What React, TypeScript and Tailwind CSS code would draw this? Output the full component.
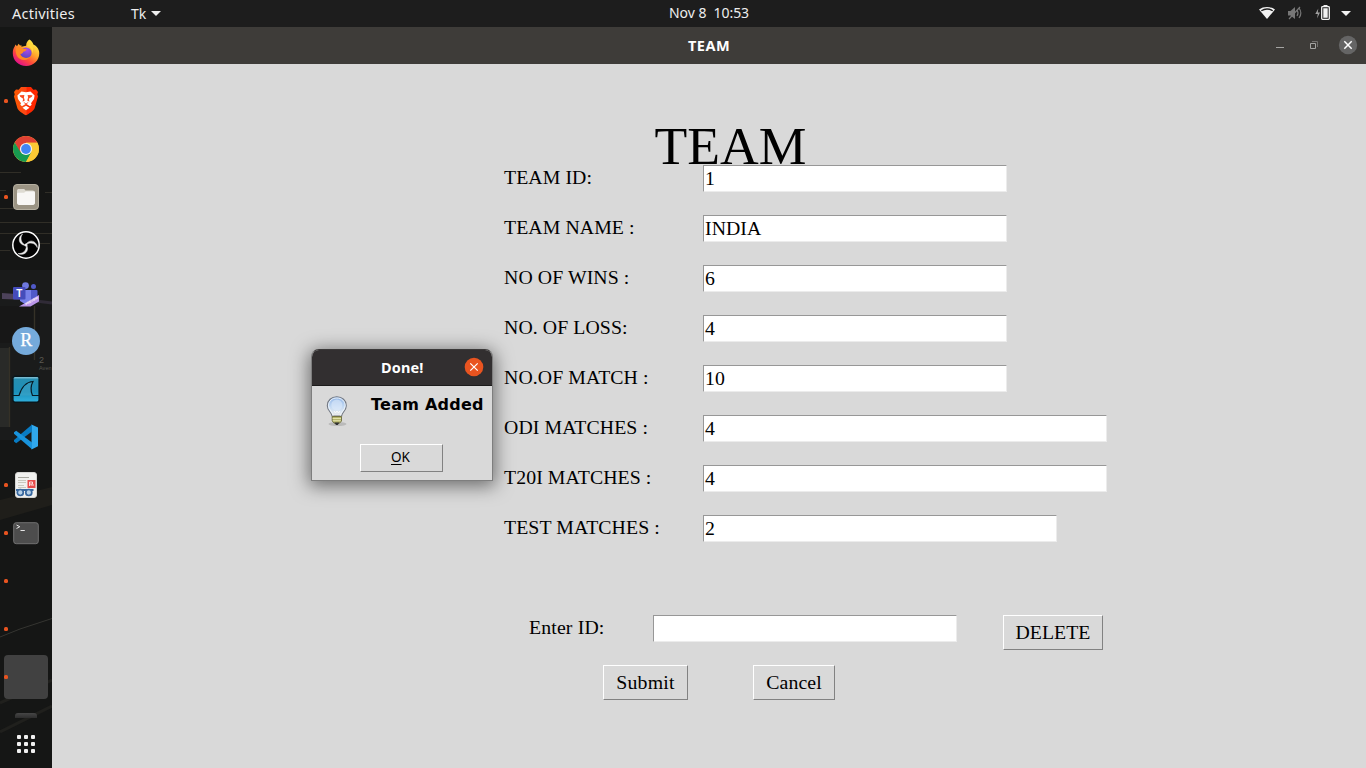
import type { ReactNode } from "react";

type Field = { label: string; value: string; width: string };

const fields: Field[] = [
  { label: "TEAM ID:", value: "1", width: "w-[304px]" },
  { label: "TEAM NAME :", value: "INDIA", width: "w-[304px]" },
  { label: "NO OF WINS :", value: "6", width: "w-[304px]" },
  { label: "NO. OF LOSS:", value: "4", width: "w-[304px]" },
  { label: "NO.OF MATCH :", value: "10", width: "w-[304px]" },
  { label: "ODI MATCHES :", value: "4", width: "w-[404px]" },
  { label: "T20I MATCHES :", value: "4", width: "w-[404px]" },
  { label: "TEST MATCHES :", value: "2", width: "w-[354px]" },
];

function Entry({ value, width }: { value: string; width: string }) {
  return (
    <div
      className={`h-[27px] shrink-0 border border-t-[#979797] border-l-[#979797] border-r-[#ececec] border-b-[#ececec] bg-white pl-px leading-[24px] ${width}`}
    >
      {value}
    </div>
  );
}

function TkButton({ children, className }: { children: ReactNode; className: string }) {
  return (
    <button
      className={`shrink-0 border border-t-white border-l-white border-r-[#828282] border-b-[#828282] bg-[#d9d9d9] ${className}`}
    >
      {children}
    </button>
  );
}

function Firefox() {
  return (
    <svg width="28" height="28" viewBox="0 0 28 28">
      <defs>
        <linearGradient id="ffBody" x1="0.85" y1="0.1" x2="0.25" y2="0.95">
          <stop offset="0" stopColor="#fff24a" />
          <stop offset="0.4" stopColor="#ffa62a" />
          <stop offset="0.7" stopColor="#ff4a3a" />
          <stop offset="1" stopColor="#e3108c" />
        </linearGradient>
        <radialGradient id="ffGlobe" cx="0.6" cy="0.2" r="0.9">
          <stop offset="0" stopColor="#b04be8" />
          <stop offset="1" stopColor="#4d45c0" />
        </radialGradient>
      </defs>
      <path d="M17.5 0.6C19.5 1.8 20.8 3.8 21.4 5.4C24 6.5 26.2 8.7 27 12C28.6 20 22.5 27 14.2 27C6.5 27 0.8 21.2 0.8 14.2C0.8 11 1.5 9 2.8 7.2L3.5 5.6L5 7.2L6.6 4.8L8 6.5L9.5 6.2L9.4 7.8L14.2 6.8C14 4 15.4 2 17.5 0.6Z" fill="url(#ffBody)" />
      <circle cx="14" cy="14" r="5.6" fill="url(#ffGlobe)" />
      <path d="M4 8.5C7 7.2 9 8 10 9.4L14.8 10.2C14.3 11.8 12.6 12.3 11.2 12.8C11 14.5 9.4 15.2 7.8 14.8C9.5 19 15 20.5 19 17C16 23 7 22 4.5 16C3.5 13 3.4 10 4 8.5Z" fill="#ff8a24" />
      <path d="M15 7C18 7.5 20.5 10 20.2 14.5C22 11 21 6 18.5 3Z" fill="#ffd83a" />
    </svg>
  );
}

function Brave() {
  return (
    <svg width="28" height="30" viewBox="0 0 28 30">
      <defs>
        <linearGradient id="braveFill" x1="0" x2="1">
          <stop offset="0" stopColor="#ff5a00" />
          <stop offset="0.5" stopColor="#fb4516" />
          <stop offset="0.55" stopColor="#ff2500" />
          <stop offset="1" stopColor="#ff2a00" />
        </linearGradient>
      </defs>
      <path d="M9 1H19L21.3 3.7L24 3.6L26 6L25.3 8.3L26 10.5L22.6 22.2C21.6 25 17 27.7 14 29.2C11 27.7 6.4 25 5.4 22.2L2 10.5L2.7 8.3L2 6L4 3.6L6.7 3.7Z" fill="url(#braveFill)" />
      <path d="M9.5 5.5L14 6.2L18.5 5.5L22.6 9.5L22 13L19 17.2L19.7 18.8L18 20.3L14 17.8L10 20.3L8.3 18.8L9 17.2L6 13L5.4 9.5Z" fill="white" />
      <path d="M7.5 9.2L12.4 8.9L11.9 11.5L12.8 14.6L10.5 15.7L11.2 12.7L8.2 10.7ZM20.5 9.2L15.6 8.9L16.1 11.5L15.2 14.6L17.5 15.7L16.8 12.7L19.8 10.7Z" fill="#fb4c22" />
      <path d="M10.5 21.8L14 19.8L17.5 21.8L14 24.3Z" fill="white" />
      <path d="M11.8 16.5L14 17.8L16.2 16.5" stroke="#fb4522" strokeWidth="0.8" fill="none" />
    </svg>
  );
}

function Chrome() {
  return (
    <svg width="26" height="26" viewBox="0 0 26 26">
      <circle cx="13" cy="13" r="13" fill="#fbc934" />
      <path d="M13 13L7 16.5L1.75 6.5A13 13 0 0 1 24.3 6.7H13Z" fill="#df4033" />
      <path d="M1.75 6.5L7.6 16.3L13 18.8L18.3 16.2L13 26A13 13 0 0 1 1.75 6.5Z" fill="#179b50" />
      <path d="M13 6.8H24.3A13 13 0 0 1 13 26L18.6 16Z" fill="#fbc934" />
      <circle cx="13" cy="13" r="6.1" fill="#f1f3f4" />
      <circle cx="13" cy="13" r="4.9" fill="#4285f4" />
    </svg>
  );
}

function Files() {
  return (
    <svg width="26" height="26" viewBox="0 0 26 26">
      <rect x="0.5" y="0.5" width="25" height="25" rx="3.5" fill="#9b9484" stroke="#b5afa0" />
      <path d="M4 7C4 5.5 4.7 5 6 5H10.5C11.5 5 12 5.6 12.4 6.5H19.5C21 6.5 22 7.2 22 8.8V18.5C22 20 21 21 19.5 21H6.5C5 21 4 20 4 18.5Z" fill="#dedbd2" />
      <path d="M4 10C4 9 4.6 8.7 5.6 8.7H11L12.8 7.4H20.6C21.6 7.4 22 8 22 9V18.5C22 20 21 21 19.5 21H6.5C5 21 4 20 4 18.5Z" fill="#f8f7f5" />
    </svg>
  );
}

function Obs() {
  const blade = "M14 14.5C10 12.5 8.3 9 9.3 5.5C9.5 4.6 9.9 3.8 10.6 3C8.4 4.3 7.2 6.5 7.3 9C7.5 12 10 14.4 14 14.5Z";
  return (
    <svg width="28" height="28" viewBox="0 0 28 28">
      <circle cx="14" cy="14" r="13.2" fill="#030303" stroke="white" strokeWidth="1.5" />
      <g fill="#eeeeee" stroke="#eeeeee" strokeWidth="0.5">
        <path d={blade} />
        <path d={blade} transform="rotate(120 14 14)" />
        <path d={blade} transform="rotate(240 14 14)" />
      </g>
      <circle cx="14" cy="14" r="1.5" fill="#eeeeee" />
    </svg>
  );
}

function Teams() {
  return (
    <svg width="28" height="28" viewBox="0 0 28 28">
      <circle cx="13.5" cy="4.6" r="3.4" fill="#7079de" />
      <circle cx="21.5" cy="5.6" r="2.5" fill="#5059c9" />
      <rect x="18" y="9" width="7.5" height="12" rx="1" fill="#5059c9" />
      <path d="M8 9H19V19C19 23 16 24 13 23L8 20Z" fill="#7780e8" />
      <rect x="1" y="6" width="12.5" height="12.5" rx="1" fill="#454cbb" />
      <text x="7.3" y="15.5" textAnchor="middle" fontSize="10" fontWeight="bold" fontFamily="Liberation Sans, sans-serif" fill="white">T</text>
      <path d="M7 25.5L27 14V20.5L18.5 25.5Z" fill="#b995e8" />
      <text transform="translate(14 24.3) rotate(-30)" fontSize="3" fontWeight="bold" fontFamily="Liberation Sans, sans-serif" fill="white">PREVIEW</text>
    </svg>
  );
}

function RStudio() {
  return (
    <svg width="28" height="28" viewBox="0 0 28 28">
      <circle cx="14" cy="14" r="14" fill="#75aadb" />
      <text x="14.2" y="19.3" textAnchor="middle" fontSize="18" fontFamily="Liberation Serif, serif" fill="white" stroke="white" strokeWidth="0.25">R</text>
    </svg>
  );
}

function Wireshark() {
  return (
    <svg width="28" height="28" viewBox="0 0 28 28">
      <defs>
        <linearGradient id="wsFill" x1="0" y1="0" x2="0" y2="1">
          <stop offset="0" stopColor="#a9d3e2" />
          <stop offset="0.12" stopColor="#268fb2" />
          <stop offset="0.6" stopColor="#1c8fb9" />
          <stop offset="1" stopColor="#30b1de" />
        </linearGradient>
      </defs>
      <rect x="0.9" y="1.3" width="26.2" height="25.8" rx="2" fill="url(#wsFill)" stroke="#07161d" strokeWidth="1.4" />
      <path d="M1 20.5H7C9 14 13 7 21 6.5C18.5 11 18.6 16 20.5 20.5H27" fill="#48a8c9" fillOpacity="0.45" stroke="#071a24" strokeWidth="1.2" />
    </svg>
  );
}

function VsCode() {
  return (
    <svg width="26" height="26" viewBox="0 0 26 26">
      <path d="M18.5 0.5L25 3.5V22.3L18.5 25.5Z" fill="#30a8ed" />
      <path d="M1 17.4L3.2 19.3L19 7.5V0.5L1 15.9Z" fill="#087bc3" />
      <path d="M1 8.2L3.2 6.7L19 18.5V25.2L1 9.7Z" fill="#1993dc" />
    </svg>
  );
}

function Viewer() {
  return (
    <svg width="24" height="26" viewBox="0 0 24 26">
      <rect x="1.5" y="0.5" width="21" height="25" rx="2.5" fill="#f0f0ee" stroke="#d4d4d2" />
      <path d="M4 5.5H15" stroke="#a6a69e" />
      <path d="M4 8.5H12M4 10.5H12M4 13.5H10M4 15.5H12" stroke="#c8c8be" />
      <rect x="13.5" y="8" width="8" height="8" fill="#e84b4b" />
      <path d="M15.5 14V10H18.5V12H16M20 13H16.5" stroke="white" strokeWidth="0.8" fill="none" />
      <path d="M2 18H19.5" stroke="#38689f" strokeWidth="2" />
      <circle cx="6.3" cy="20.5" r="3" fill="#b6d0e8" stroke="#38689f" strokeWidth="1.7" />
      <circle cx="14.8" cy="20.5" r="3" fill="#b6d0e8" stroke="#38689f" strokeWidth="1.7" />
    </svg>
  );
}

function Terminal() {
  return (
    <svg width="26" height="24" viewBox="0 0 26 24">
      <rect x="0.7" y="1.7" width="24.6" height="21" rx="2.5" fill="#4d4d4d" stroke="#717171" />
      <path d="M3.5 4L6.8 5.7L3.5 7.5M7.5 9.5H11.8" stroke="#e6e6e6" fill="none" />
    </svg>
  );
}

const dock: { icon?: ReactNode; running?: boolean; active?: boolean; shift?: string }[] = [
  { icon: <Firefox /> },
  { icon: <Brave />, running: true },
  { icon: <Chrome /> },
  { icon: <Files />, running: true },
  { icon: <Obs /> },
  { icon: <Teams />, shift: "pt-[3px]" },
  { icon: <RStudio /> },
  { icon: <Wireshark /> },
  { icon: <VsCode /> },
  { icon: <Viewer />, running: true },
  { icon: <Terminal />, running: true },
  { running: true },
  { running: true },
  { running: true, active: true },
];

function Wallpaper() {
  return (
    <svg className="absolute inset-0" width="52" height="741" viewBox="0 27 52 741">
      <rect y="27" width="52" height="741" fill="#151615" />
      <path d="M0 270H52V440H0Z" fill="#1a1b1b" />
      <path d="M0 172.5H21M0 190.5H6M45 192.5H52M0 208.5H20M0 222.5H52M0 233.5H20M30 233.5H52M0 250.5H10M40 243.5H50" stroke="#37352c" strokeWidth="0.8" />
      <path d="M2 293L30 295V300L2 299Z" fill="#4c425a" />
      <path d="M28 300L52 303" stroke="#302b37" strokeWidth="3" />
      <path d="M0 306H40V343H0Z" fill="#171717" />
      <path d="M0 348H9V427H0Z" fill="#292a28" />
      <path d="M9.5 347V427M34.5 306V360" stroke="#353127" strokeWidth="1.4" />
      <text x="39" y="363" fontSize="9" fontFamily="Liberation Sans, sans-serif" fill="#5c5a53">2</text>
      <text x="39" y="370" fontSize="5.5" fontFamily="Liberation Sans, sans-serif" fill="#54534c">Aven</text>
      <path d="M0 500L52 487V505L0 520Z" fill="#1f1e1a" />
      <path d="M0 637L20 629L52 618.5" stroke="#353531" fill="none" />
      <path d="M0 703L52 680M0 732L52 706" stroke="#20201d" strokeWidth="3" />
    </svg>
  );
}

export default function App() {
  return (
    <div className="relative flex h-[768px] w-[1366px] flex-col overflow-hidden bg-[#d9d9d9] font-['Liberation_Serif',serif] text-[19.8px] tracking-[0.05px] text-black">
      <header className="flex h-[27px] shrink-0 items-center bg-[#1d1d1d] font-['Noto_Sans',sans-serif] text-[14px] leading-[27px] tracking-normal text-[#eeeeee]">
        <div className="w-[131px] pl-3 text-[14.5px] tracking-[0.25px]">Activities</div>
        <div className="flex w-[538px] items-center gap-[5px]">
          <span>Tk</span>
          <svg width="10" height="5" viewBox="0 0 10 5"><path d="M0 0H10L5 5Z" fill="#eeeeee" /></svg>
        </div>
        <div className="w-[589px] whitespace-pre pb-[2px] leading-[25px] tracking-[-0.05px]">Nov 8  10:53</div>
        <svg width="108" height="27" viewBox="1258 0 108 27">
          <path d="M1259 9.5C1263.5 6.2 1270.5 6.2 1275 9.5L1267 19Z" fill="#f2f2f2" />
          <path d="M1261.3 10.7C1264.7 8.7 1269.3 8.7 1272.7 10.7" stroke="#1d1d1d" strokeWidth="1.3" fill="none" />
          <path d="M1288 11H1290.5L1295 7V19L1290.5 15.5H1288Z" fill="#777777" />
          <path d="M1297 10Q1299 13 1297 16M1299 8Q1302.7 13 1299 18M1289 19L1300 7" stroke="#777777" strokeWidth="1.2" fill="none" />
          <path d="M1318.3 8.5L1315.3 14H1317.8L1317 18.5L1320 12.5H1317.8Z" fill="#a0a0a0" />
          <rect x="1321.7" y="6.7" width="7.6" height="12.6" rx="0.8" stroke="#f2f2f2" strokeWidth="1.3" fill="none" />
          <path d="M1323.5 5H1327.5V6.5H1323.5ZM1323.3 8.3H1327.7V17.7H1323.3Z" fill="#f2f2f2" />
          <path d="M1341 11H1351L1346 16Z" fill="#f2f2f2" />
        </svg>
      </header>

      <div className="flex min-h-0 flex-1">
        <aside className="relative flex w-[52px] shrink-0 flex-col overflow-hidden">
          <Wallpaper />
          <nav className="relative flex flex-col pt-[2px]">
            {dock.map((item, i) => (
              <div key={i} className="relative flex h-12 items-center justify-center">
                {item.active && <div className="h-11 w-11 rounded-[4px] bg-[#414141]" />}
                <span className={item.shift}>{item.icon}</span>
                {item.running && (
                  <span className="absolute top-[22px] left-1 h-1 w-1 rounded-[1.5px] bg-[#e95420]" />
                )}
              </div>
            ))}
          </nav>
          <div className="relative mt-[12px] ml-[15px] h-[5px] w-[22px] rounded-t-[3px] bg-linear-to-b from-[#464646] to-[#2e2e2e]" />
          <div className="relative mt-[17px] ml-[17px] grid w-[18px] grid-cols-3 gap-[3px]">
            {Array.from({ length: 9 }, (_, i) => (
              <span key={i} className="h-1 w-1 rounded-[1px] bg-[#f0f0f0]" />
            ))}
          </div>
        </aside>

        <main className="flex min-w-0 flex-1 flex-col">
          <div className="flex h-[37px] shrink-0 items-center bg-[#3e3c39] font-['Noto_Sans',sans-serif] text-white">
            <div className="w-[1223px] pl-[636px] text-[14.5px] font-bold tracking-[0.5px]">TEAM</div>
            <svg width="91" height="37" viewBox="1275 27 91 37">
              <path d="M1276 47.5H1284" stroke="#a5a5a3" />
              <path d="M1310.5 43.5H1315.5V48.5H1310.5Z" stroke="#a5a5a3" fill="none" />
              <path d="M1312 41.5H1317.5V47" stroke="#73716f" fill="none" />
              <circle cx="1348" cy="45" r="9.2" fill="#656565" />
              <path d="M1344.3 41.3L1351.7 48.7M1351.7 41.3L1344.3 48.7" stroke="white" strokeWidth="1.5" />
            </svg>
          </div>

          <section className="flex flex-1 flex-col pt-[63px]">
            <h1 className="ml-[602.5px] h-[38px] text-[53.6px] leading-[38px]">TEAM</h1>
            {fields.map((f) => (
              <div key={f.label} className="flex h-[50px] shrink-0 items-start pl-[452px]">
                <label className="w-[199px] leading-[25px] tracking-[0.09px]">{f.label}</label>
                <Entry value={f.value} width={f.width} />
              </div>
            ))}
            <div className="mt-[50px] flex h-[50px] shrink-0 items-start pl-[477px]">
              <label className="w-[124px] leading-[25px] tracking-[0.15px]">Enter ID:</label>
              <Entry value="" width="w-[304px]" />
              <TkButton className="ml-[46px] h-[35px] w-[100px]">DELETE</TkButton>
            </div>
            <div className="flex items-start gap-[65px] pl-[551px]">
              <TkButton className="h-[35px] w-[85px] tracking-[0.2px]">Submit</TkButton>
              <TkButton className="h-[35px] w-[82px] tracking-[0.1px]">Cancel</TkButton>
            </div>
          </section>
        </main>
      </div>

      <div
        role="dialog"
        className="absolute top-[349px] left-[311px] flex h-[132px] w-[182px] flex-col overflow-hidden rounded-t-[8px] border border-t-[#3b3939] border-r-[#7e7e7e] border-b-[#7e7e7e] border-l-[#7e7e7e] bg-[#d9d9d9] shadow-[0_3px_18px_2px_rgba(0,0,0,0.5)]"
      >
        <div className="flex h-[36px] shrink-0 items-center border-b border-[#1c1b1b] bg-[#322f30] pb-px font-['Noto_Sans',sans-serif] text-[14.5px] font-bold text-white">
          <span className="w-[152px] pt-[2px] pl-[69px] tracking-[0.1px]">Done!</span>
          <svg width="20" height="20" viewBox="0 0 20 20">
            <circle cx="10" cy="10" r="9.3" fill="#e95420" />
            <path d="M6.3 6.3L13.7 13.7M13.7 6.3L6.3 13.7" stroke="white" strokeWidth="1.2" />
          </svg>
        </div>
        <div className="flex h-[58px] shrink-0 items-start">
          <svg className="mt-[9px] ml-[12px]" width="26" height="34" viewBox="0 0 26 34">
            <defs>
              <linearGradient id="bulb" x1="0" y1="0" x2="0" y2="1">
                <stop offset="0" stopColor="#8fb4e6" />
                <stop offset="0.55" stopColor="#c7dcf4" />
                <stop offset="1" stopColor="#eeeeec" />
              </linearGradient>
            </defs>
            <ellipse cx="13.5" cy="29" rx="9" ry="2" fill="#a5a5a5" opacity="0.6" />
            <path d="M8 21C8 17.5 3.3 16 3.3 10.7C3.3 5.3 7.5 1.8 12.8 1.8S22.3 5.3 22.3 10.7C22.3 16 17.6 17.5 17.6 21Z" fill="url(#bulb)" stroke="#747983" strokeWidth="1.1" />
            <path d="M9 20.5C9 17 4.5 15 4.5 10.6C4.5 6 8.2 3 12.8 3S21.2 6 21.2 10.6C21.2 15 16.5 17 16.5 20.5" fill="none" stroke="#f1f6fb" strokeWidth="0.9" />
            <circle cx="12.8" cy="10" r="5.5" fill="#dceafa" opacity="0.6" />
            <path d="M10 16L11.5 18L13 16L14.5 18L16 16" stroke="#fafafa" fill="none" />
            <path d="M8.2 21.5H17.5V26L15.5 28.2H10.2L8.2 26Z" fill="#b4b46c" stroke="#6c6c3b" strokeWidth="0.9" />
            <path d="M8.6 23.5H17M8.8 25.7H16.8" stroke="#e3e2a8" />
            <path d="M10.3 27.6H15.4L13.8 30H12Z" fill="#333333" />
          </svg>
          <div className="mt-[8px] ml-[21px] whitespace-nowrap font-['DejaVu_Sans',sans-serif] text-[16px] leading-[22px] font-bold tracking-[0.25px]">Team Added</div>
        </div>
        <TkButton className="ml-12 h-[28px] w-[83px] pr-[2px] pb-[2px] font-['Noto_Sans',sans-serif] text-[13.5px] leading-[24px]">
          <span className="underline underline-offset-[2px]">O</span>K
        </TkButton>
      </div>
    </div>
  );
}
